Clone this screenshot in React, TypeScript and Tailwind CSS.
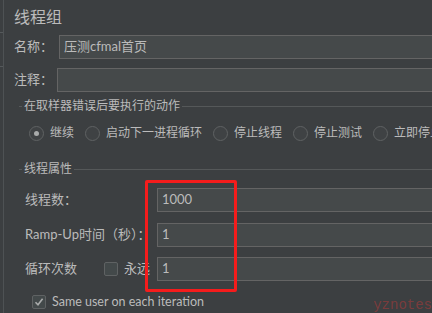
const cjk = "font-['Lato','Noto_Sans_CJK_SC',sans-serif]";

const Field = ({ value, className }: { value?: string; className?: string }) => (
  <div
    className={`flex-1 h-[24px] bg-[#45494a] border border-[#646464] flex items-center pl-[4px] text-[13px] text-[#bbbbbb] ${className ?? ""}`}
  >
    {value}
  </div>
);

const Radio = ({ label, checked }: { label: string; checked?: boolean }) => (
  <div className="flex items-center mr-[11px] shrink-0">
    <span className="w-[15px] h-[15px] rounded-full border border-[#5f6263] bg-[#3f4244] flex items-center justify-center">
      {checked && <span className="w-[5px] h-[5px] rounded-full bg-[#a9abab]" />}
    </span>
    <span className="ml-[6px] text-[12px] leading-[16px] whitespace-nowrap">{label}</span>
  </div>
);

const GroupTitle = ({ title }: { title: string }) => (
  <div className="flex items-center h-[16px] ml-[5px]">
    <span className="w-[3px] h-px bg-[#555859]" />
    <span className="px-[2px] text-[12px] leading-[16px] whitespace-nowrap">{title}</span>
    <span className="flex-1 h-px bg-[#555859]" />
  </div>
);

export default function App() {
  return (
    <div className={`relative w-[432px] h-[313px] overflow-hidden bg-[#3c3f41] text-[#bbbbbb] flex ${cjk}`}>
      {/* left split strip */}
      <div className="w-[4px] shrink-0 border-r border-[#4e5254] flex flex-col">
        <div className="h-[33px] border-b border-[#55595b]" />
        <div className="h-[34px] border-b border-[#55595b]" />
        <div className="h-[62px]" />
        <div className="text-[12px] leading-[10px] -ml-[4px] text-[#9a9a9a]">l</div>
      </div>

      <div className="w-[470px] shrink-0 pl-[10px] flex flex-col">
        <div className="h-[30px] pt-[7px] text-[16px] leading-[20px]">线程组</div>

        <div className="flex items-center h-[24px] mt-[5px]">
          <span className="w-[45px] text-[13px]">名称：</span>
          <Field value="压测cfmal首页" />
        </div>

        <div className="flex items-center h-[24px] mt-[9px]">
          <span className="w-[43px] text-[13px]">注释：</span>
          <Field />
        </div>

        <div className="mt-[6px]">
          <GroupTitle title="在取样器错误后要执行的动作" />
        </div>

        <div className="flex items-center h-[20px] mt-[9px] pl-[15px]">
          <Radio label="继续" checked />
          <Radio label="启动下一进程循环" />
          <Radio label="停止线程" />
          <Radio label="停止测试" />
          <Radio label="立即停止线程" />
        </div>

        <div className="mt-[18px]">
          <GroupTitle title="线程属性" />
        </div>

        <div className="flex items-center h-[24px] mt-[11px] pl-[11px]">
          <span className="w-[132px] text-[13px]">线程数：</span>
          <Field value="1000" />
        </div>

        <div className="flex items-center h-[24px] mt-[11px] pl-[11px]">
          <span className="w-[132px] text-[13px] whitespace-nowrap">Ramp-Up时间（秒）：</span>
          <Field value="1" />
        </div>

        <div className="flex items-center h-[24px] mt-[10px] pl-[11px]">
          <span className="w-[79px] text-[13px]">循环次数</span>
          <span className="w-[14px] h-[14px] rounded-[2px] border border-[#5f6263] bg-[#43494a]" />
          <span className="w-[39px] pl-[6px] text-[13px] overflow-hidden whitespace-nowrap">永远</span>
          <Field value="1" />
        </div>

        <div className="flex items-center h-[16px] mt-[13px] pl-[18px]">
          <span className="w-[14px] h-[14px] rounded-[2px] border border-[#5f6263] bg-[#43494a] flex items-center justify-center">
            <svg width="10" height="10" viewBox="0 0 10 10">
              <path d="M1.5 5.2 L4 7.8 L8.6 1.8" stroke="#a9abab" strokeWidth="1.6" fill="none" />
            </svg>
          </span>
          <span className="ml-[6px] text-[12.5px] whitespace-nowrap">Same user on each iteration</span>
        </div>
      </div>

      {/* annotation box */}
      <div className="absolute left-[145px] top-[180px] w-[92px] h-[112px] border-[3px] border-[#f51c1c] rounded-[2px]" />

      {/* watermark */}
      <div className="absolute right-[0px] bottom-[0px] text-[14px] leading-[15px] font-['Liberation_Mono',monospace] text-[#8b3b3b]/80">
        yznotes
      </div>
    </div>
  );
}
